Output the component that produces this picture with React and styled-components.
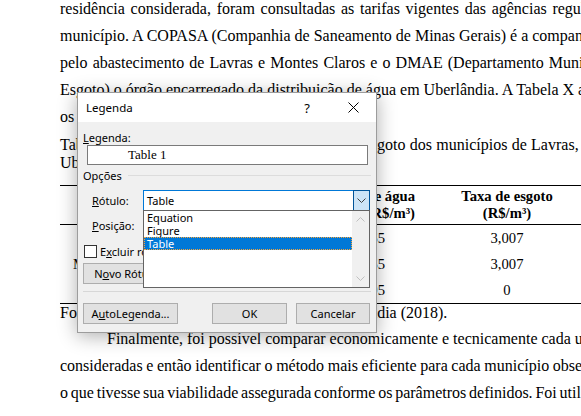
import React from 'react';
import styled, { createGlobalStyle } from 'styled-components';

const GlobalStyle = createGlobalStyle`
  html, body {
    margin: 0;
    padding: 0;
    background: #fff;
  }
  body {
    overflow: hidden;
  }
`;

const Page = styled.div`
  position: relative;
  width: 581px;
  height: 416px;
  overflow: hidden;
  background: #fff;
  color: #000;
  font-family: "Liberation Serif", "Times New Roman", serif;
`;

const Sheet = styled.div`
  margin-top: -5.5px;
  padding-left: 60px;
`;

const Line = styled.div`
  font-size: 16px;
  line-height: 27px;
  white-space: nowrap;
  word-spacing: ${p => p.$ws || 0}px;
  padding-left: ${p => p.$indent || 0}px;
  margin-top: ${p => p.$mt || 0}px;
`;

const Caption = styled.div`
  margin-top: ${p => (p.$first ? 6.3 : 0)}px;
  font-size: 16px;
  line-height: 18.4px;
  white-space: nowrap;
  word-spacing: ${p => p.$ws || 0}px;
`;

const Table = styled.div`
  margin-top: 12.4px;
  width: 534px;
  display: grid;
  grid-template-columns: 112px 248px 174px;
  border-top: 1px solid #000;
  border-bottom: 1px solid #000;
  font-size: 14.67px;
`;

const HeadCell = styled.div`
  border-bottom: 1px solid #000;
  padding: 2px ${p => p.$pr || 0}px 2px 0;
  height: 34px;
  line-height: 16.9px;
  font-weight: bold;
  text-align: ${p => p.$align || 'center'};
  white-space: nowrap;
`;

const Cell = styled.div`
  height: 26px;
  line-height: 26px;
  padding-right: ${p => p.$pr || 0}px;
  text-align: ${p => p.$align || 'center'};
  white-space: nowrap;
`;

const Source = styled.div`
  font-size: 16px;
  line-height: 18.4px;
  white-space: nowrap;
`;

/* caption dialog */

const Dialog = styled.div`
  position: absolute;
  left: 77px;
  top: 92px;
  width: 300px;
  height: 241px;
  box-sizing: border-box;
  border: 1px solid #9c9c9c;
  background: #f0f0f0;
  box-shadow: 0 3px 18px rgba(0, 0, 0, 0.32);
  display: flex;
  flex-direction: column;
  font-family: "Noto Sans", "Segoe UI", sans-serif;
  font-size: 11px;
  color: #000;
`;

const TitleBar = styled.div`
  height: 29px;
  flex: none;
  display: flex;
  align-items: center;
  background: #fff;
`;

const Title = styled.div`
  flex: 1;
  padding-left: 8px;
  font-size: 11.5px;
`;

const TitleButton = styled.div`
  width: 46px;
  height: 29px;
  display: flex;
  align-items: center;
  justify-content: center;
  font-size: 13px;
`;

const Body = styled.div`
  flex: 1;
  display: flex;
  flex-direction: column;
  padding: 0 8px 0 5px;
`;

const FieldLabel = styled.div`
  margin-top: 7.5px;
  line-height: 15px;
`;

const TextBox = styled.div`
  margin-left: 4px;
  height: 20px;
  box-sizing: border-box;
  border: 1px solid #7a7a7a;
  background: #fff;
  padding-left: 40px;
  font-family: "Liberation Serif", "Times New Roman", serif;
  font-size: 13px;
  line-height: 18px;
`;

const GroupHead = styled.div`
  margin-top: 3.5px;
  margin-right: -3px;
  display: flex;
  align-items: center;
  gap: 6px;
  line-height: 15px;

  &::after {
    content: '';
    flex: 1;
    height: 1px;
    background: #dcdcdc;
  }
`;

const OptionRow = styled.div`
  margin-top: ${p => p.$mt}px;
  margin-right: -2px;
  height: 21px;
  display: grid;
  grid-template-columns: 60px 1fr;
  align-items: center;
`;

const OptionLabel = styled.div`
  padding-left: 9px;
`;

const Combo = styled.div`
  height: 21px;
  box-sizing: border-box;
  border: 1px solid ${p => (p.$open ? '#0078d7' : '#7a7a7a')};
  background: #fff;
  display: flex;
  align-items: center;
`;

const ComboText = styled.div`
  flex: 1;
  padding-left: 3px;
`;

const ComboButton = styled.div`
  width: 17px;
  height: 21px;
  margin: -1px -1px -1px 0;
  box-sizing: border-box;
  border: 1px solid ${p => (p.$open ? '#005499' : 'transparent')};
  background: ${p => (p.$open ? '#cce4f7' : 'transparent')};
  display: flex;
  align-items: center;
  justify-content: center;
`;

const CheckRow = styled.div`
  margin-top: 9px;
  height: 13px;
  display: flex;
  align-items: center;
  gap: 3px;
  padding-left: 1px;
  white-space: nowrap;
`;

const CheckBox = styled.div`
  width: 13px;
  height: 13px;
  box-sizing: border-box;
  border: 1px solid #333;
  background: #fff;
`;

const ButtonRow = styled.div`
  margin-top: ${p => p.$mt}px;
  display: flex;
  gap: ${p => p.$gap || 10}px;
`;

const Button = styled.div`
  width: ${p => p.$w}px;
  height: 21px;
  box-sizing: border-box;
  border: 1px solid #adadad;
  background: #e1e1e1;
  display: flex;
  align-items: center;
  justify-content: center;
  white-space: nowrap;
  margin-left: ${p => (p.$push ? 'auto' : '0')};
`;

const Separator = styled.div`
  margin-top: 7px;
  margin-right: -3px;
  height: 1px;
  background: #d7d7d7;
`;

const Footer = styled.div`
  margin-top: 11px;
  margin-right: -2px;
  display: flex;
  gap: 9px;
`;

/* open list of the Rótulo combo, lying over the lower options */

const DropList = styled.div`
  position: absolute;
  left: 65px;
  top: 117px;
  width: 227px;
  height: 78px;
  box-sizing: border-box;
  border: 1px solid #646464;
  background: #fff;
  display: grid;
  grid-template-columns: 1fr 17px;
`;

const Items = styled.div`
  display: flex;
  flex-direction: column;
`;

const Item = styled.div`
  height: 13px;
  line-height: 12px;
  padding-left: 2px;
  box-sizing: border-box;
  border: 1px dotted ${p => (p.$selected ? '#f5a43a' : 'transparent')};
  background: ${p => (p.$selected ? '#0078d7' : 'transparent')};
  color: ${p => (p.$selected ? '#fff' : '#000')};
`;

const ScrollTrack = styled.div`
  background: #f0f0f0;
  display: flex;
  flex-direction: column;
  justify-content: space-between;
`;

const ScrollArrow = styled.div`
  height: 17px;
  display: flex;
  align-items: center;
  justify-content: center;
`;

const Chevron = ({ up, color = '#404040' }) => (
  <svg width="9" height="5" viewBox="0 0 9 5">
    <polyline
      points={up ? '0.5,4.5 4.5,0.5 8.5,4.5' : '0.5,0.5 4.5,4.5 8.5,0.5'}
      fill="none"
      stroke={color}
      strokeWidth="1"
    />
  </svg>
);

const CloseIcon = () => (
  <svg width="11" height="11" viewBox="0 0 11 11">
    <path d="M0.5 0.5 L10.5 10.5 M10.5 0.5 L0.5 10.5" stroke="#000" strokeWidth="1" />
  </svg>
);

const rows = [
  { city: 'Lavras', water: '3,465', sewer: '3,007' },
  { city: 'Montes Claros', water: '3,465', sewer: '3,007' },
  { city: 'Uberlândia', water: '2,895', sewer: '0' },
];

export default function App() {
  return (
    <Page>
      <GlobalStyle />
      <Sheet>
        <Line $ws={1.7}>residência considerada, foram consultadas as tarifas vigentes das agências reguladoras</Line>
        <Line $ws={0}>município. A COPASA (Companhia de Saneamento de Minas Gerais) é a companhia</Line>
        <Line $ws={1.1}>pelo abastecimento de Lavras e Montes Claros e o DMAE (Departamento Municipal</Line>
        <Line $ws={0}>Esgoto) o órgão encarregado da distribuição de água em Uberlândia. A Tabela X apresenta</Line>
        <Line>os valores praticados.</Line>

        <Caption $first $ws={0.3}>Tabela X – Valores atuais das tarifas de água e esgoto dos municípios de Lavras, Montes</Caption>
        <Caption>Uberlândia.</Caption>

        <Table>
          <HeadCell>Município</HeadCell>
          <HeadCell $align="right" $pr={5}>Taxa de água<br />(R$/m³)</HeadCell>
          <HeadCell>Taxa de esgoto<br />(R$/m³)</HeadCell>
          {rows.map(r => (
            <React.Fragment key={r.city}>
              <Cell>{r.city}</Cell>
              <Cell $align="right" $pr={35}>{r.water}</Cell>
              <Cell>{r.sewer}</Cell>
            </React.Fragment>
          ))}
        </Table>

        <Source>Fonte: Adaptado de COPASA e DMAE - Uberlândia (2018).</Source>

        <Line $indent={47} $mt={3}>Finalmente, foi possível comparar economicamente e tecnicamente cada uma</Line>
        <Line $ws={-0.4}>consideradas e então identificar o método mais eficiente para cada município observando</Line>
        <Line $ws={-1.2}>o que tivesse sua viabilidade assegurada conforme os parâmetros definidos. Foi utilizado</Line>
      </Sheet>

      <Dialog>
        <TitleBar>
          <Title>Legenda</Title>
          <TitleButton>?</TitleButton>
          <TitleButton><CloseIcon /></TitleButton>
        </TitleBar>

        <Body>
          <FieldLabel><u>L</u>egenda:</FieldLabel>
          <TextBox>Table 1</TextBox>

          <GroupHead>Opções</GroupHead>

          <OptionRow $mt={6.5}>
            <OptionLabel><u>R</u>ótulo:</OptionLabel>
            <Combo $open>
              <ComboText>Table</ComboText>
              <ComboButton $open><Chevron /></ComboButton>
            </Combo>
          </OptionRow>

          <OptionRow $mt={4}>
            <OptionLabel><u>P</u>osição:</OptionLabel>
            <Combo>
              <ComboText>Abaixo do item selecionado</ComboText>
              <ComboButton><Chevron /></ComboButton>
            </Combo>
          </OptionRow>

          <CheckRow>
            <CheckBox />
            <span>E<u>x</u>cluir rótulo da legenda</span>
          </CheckRow>

          <ButtonRow $mt={5}>
            <Button $w={95}>N<u>o</u>vo Rótulo...</Button>
            <Button $w={95}>Excluir Rótulo</Button>
            <Button $w={75}>Numeração...</Button>
          </ButtonRow>

          <Separator />

          <Footer>
            <Button $w={95}>A<u>u</u>toLegenda...</Button>
            <Button $w={75} $push>OK</Button>
            <Button $w={74}>Cancelar</Button>
          </Footer>
        </Body>

        <DropList>
          <Items>
            <Item>Equation</Item>
            <Item>Figure</Item>
            <Item $selected>Table</Item>
          </Items>
          <ScrollTrack>
            <ScrollArrow><Chevron up color="#c0c0c0" /></ScrollArrow>
            <ScrollArrow><Chevron color="#c0c0c0" /></ScrollArrow>
          </ScrollTrack>
        </DropList>
      </Dialog>
    </Page>
  );
}
